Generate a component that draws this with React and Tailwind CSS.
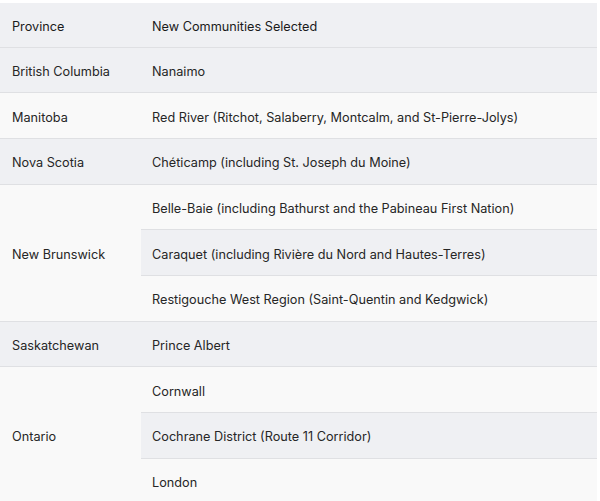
import React from 'react';

const rows = [
  { province: 'British Columbia', communities: ['Nanaimo'] },
  { province: 'Manitoba', communities: ['Red River (Ritchot, Salaberry, Montcalm, and St-Pierre-Jolys)'] },
  { province: 'Nova Scotia', communities: ['Chéticamp (including St. Joseph du Moine)'] },
  {
    province: 'New Brunswick',
    communities: [
      'Belle-Baie (including Bathurst and the Pabineau First Nation)',
      'Caraquet (including Rivière du Nord and Hautes-Terres)',
      'Restigouche West Region (Saint-Quentin and Kedgwick)',
    ],
  },
  { province: 'Saskatchewan', communities: ['Prince Albert'] },
  { province: 'Ontario', communities: ['Cornwall', 'Cochrane District (Route 11 Corridor)', 'London'] },
];

export default function App() {
  return (
    <div className="bg-white w-[600px] h-[501px] overflow-hidden pt-[3px] font-['Inter','Liberation_Sans',sans-serif] text-[12.7px] text-[#262626]">
      <table className="w-[597px] border-collapse">
        <thead>
          <tr className="bg-[#eff0f3] h-[44px] border-b border-[#dfe0e3]">
            <th className="w-[141px] text-left font-normal pl-3 pt-[3px] text-[#1a1a1a]">Province</th>
            <th className="text-left font-normal pl-[11px] pt-[3px] text-[#1a1a1a]">New Communities Selected</th>
          </tr>
        </thead>
        <tbody className="[&>tr:nth-child(odd)]:bg-[#eff0f3] [&>tr:nth-child(even)]:bg-[#f9f9f9]">
          {rows.flatMap((r) =>
            r.communities.map((c, i) => (
              <tr key={r.province + i} className="h-[45.7px] border-b border-[#dfe0e3]">
                {i === 0 && (
                  <td rowSpan={r.communities.length} className="pl-3 pt-[3px] align-middle bg-inherit">
                    {r.province}
                  </td>
                )}
                <td className="pl-[11px] pt-[3px]">{c}</td>
              </tr>
            ))
          )}
        </tbody>
      </table>
    </div>
  );
}
